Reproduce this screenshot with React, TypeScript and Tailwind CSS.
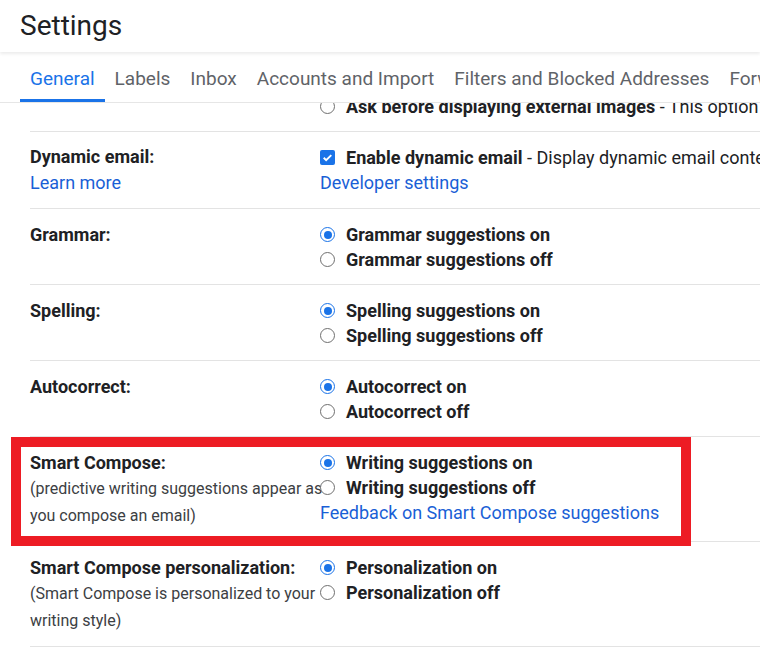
import React from 'react'

const tabs = ['General', 'Labels', 'Inbox', 'Accounts and Import', 'Filters and Blocked Addresses', 'Forwarding and POP/IMAP']

function Radio({ checked }: { checked?: boolean }) {
  return (
    <span
      className={`flex h-[15px] w-[15px] shrink-0 items-center justify-center rounded-full border-[1.5px] bg-white ${
        checked ? 'border-[#1a73e8]' : 'border-[#6f6f6f]'
      }`}
    >
      {checked && <span className="h-[8px] w-[8px] rounded-full bg-[#1a73e8]" />}
    </span>
  )
}

function Option({ label, checked }: { label: string; checked?: boolean }) {
  return (
    <div className="flex h-[25px] items-center">
      <Radio checked={checked} />
      <span className="ml-[11px] font-bold text-[#202124]">{label}</span>
    </div>
  )
}

function Row({ label, children }: { label: string; children: React.ReactNode }) {
  return (
    <div className="ml-[30px] flex border-t border-[#e3e3e3] pt-[13px] pb-[12px]">
      <div className="w-[290px] shrink-0">
        <div className="h-[25px] leading-[25px] font-bold text-[#202124]">{label}</div>
      </div>
      <div className="min-w-0 flex-1">{children}</div>
    </div>
  )
}

export default function App() {
  return (
    <div
      className="flex h-[652px] w-[760px] flex-col overflow-hidden bg-white text-[18px]"
      style={{ fontFamily: 'Roboto, "Liberation Sans", sans-serif' }}
    >
      {/* header + tabs sit above the scrolled list */}
      <div className="relative z-10 bg-white">
        <div className="flex h-[52px] items-center px-5 text-[28px] text-[#202124] shadow-[0_2px_3px_rgba(0,0,0,0.08)]">
          Settings
        </div>
        <div className="mt-[3px] flex h-[48px] border-b border-[#e6e6e6] whitespace-nowrap pl-[20px]">
          {tabs.map((t, i) => (
            <div
              key={t}
              className={`flex items-center border-b-[3px] px-[10px] pt-[5px] text-[19px] ${
                i === 0 ? 'border-[#1a73e8] text-[#1a73e8]' : 'border-transparent text-[#5f6368]'
              }`}
            >
              {t}
            </div>
          ))}
        </div>
      </div>

      <div className="-mt-[9px] whitespace-nowrap">
        {/* tail of the images row, partly under the tab bar */}
        <div className="ml-[30px] flex pb-[12px]">
          <div className="w-[290px] shrink-0" />
          <div className="flex h-[25px] items-center">
            <Radio />
            <span className="ml-[11px] text-[#202124]">
              <span className="font-bold">Ask before displaying external images</span> - This option also disables dynamic email
            </span>
          </div>
        </div>

        <div className="ml-[30px] flex border-t border-[#e3e3e3] pt-[12px] pb-[12px]">
          <div className="w-[290px] shrink-0">
            <div className="h-[26px] leading-[26px] font-bold text-[#202124]">Dynamic email:</div>
            <div className="h-[26px] leading-[26px] text-[#1a5fd6]">Learn more</div>
          </div>
          <div className="min-w-0 flex-1">
            <div className="flex h-[26px] items-center">
              <span className="flex h-[15px] w-[15px] shrink-0 items-center justify-center rounded-[2px] bg-[#1a73e8]">
                <svg viewBox="0 0 24 24" className="h-[13px] w-[13px]" fill="none" stroke="white" strokeWidth="3.5">
                  <path d="M5 12.5l4.5 4.5L19 7.5" />
                </svg>
              </span>
              <span className="ml-[11px] text-[#202124]">
                <span className="font-bold">Enable dynamic email</span> - Display dynamic email content when available
              </span>
            </div>
            <div className="h-[26px] leading-[26px] text-[#1a5fd6]">Developer settings</div>
          </div>
        </div>

        <Row label="Grammar:">
          <Option label="Grammar suggestions on" checked />
          <Option label="Grammar suggestions off" />
        </Row>

        <Row label="Spelling:">
          <Option label="Spelling suggestions on" checked />
          <Option label="Spelling suggestions off" />
        </Row>

        <Row label="Autocorrect:">
          <Option label="Autocorrect on" checked />
          <Option label="Autocorrect off" />
        </Row>

        <div className="relative ml-[30px] flex border-t border-[#e3e3e3] pt-[13px] pb-[12px]">
          <div className="w-[290px] shrink-0">
            <div className="h-[25px] leading-[25px] font-bold text-[#202124]">Smart Compose:</div>
            <div className="text-[16px] leading-[27px] text-[#3c4043]">(predictive writing suggestions appear as</div>
            <div className="text-[16px] leading-[27px] text-[#3c4043]">you compose an email)</div>
          </div>
          <div className="min-w-0 flex-1">
            <Option label="Writing suggestions on" checked />
            <Option label="Writing suggestions off" />
            <div className="h-[25px] leading-[25px] text-[#1a5fd6]">Feedback on Smart Compose suggestions</div>
          </div>
          {/* red annotation frame */}
          <div className="pointer-events-none absolute left-[-19px] top-0 h-[109px] w-[680px] border-[10px] border-[#ed1c24]" />
        </div>

        <div className="ml-[30px] flex border-t border-[#e3e3e3] pt-[13px] pb-[12px]">
          <div className="w-[290px] shrink-0">
            <div className="h-[25px] leading-[25px] font-bold text-[#202124]">Smart Compose personalization:</div>
            <div className="text-[16px] leading-[27px] text-[#3c4043]">(Smart Compose is personalized to your</div>
            <div className="text-[16px] leading-[27px] text-[#3c4043]">writing style)</div>
          </div>
          <div className="min-w-0 flex-1">
            <Option label="Personalization on" checked />
            <Option label="Personalization off" />
          </div>
        </div>
        <div className="ml-[30px] border-t border-[#e3e3e3]" />
      </div>
    </div>
  )
}
